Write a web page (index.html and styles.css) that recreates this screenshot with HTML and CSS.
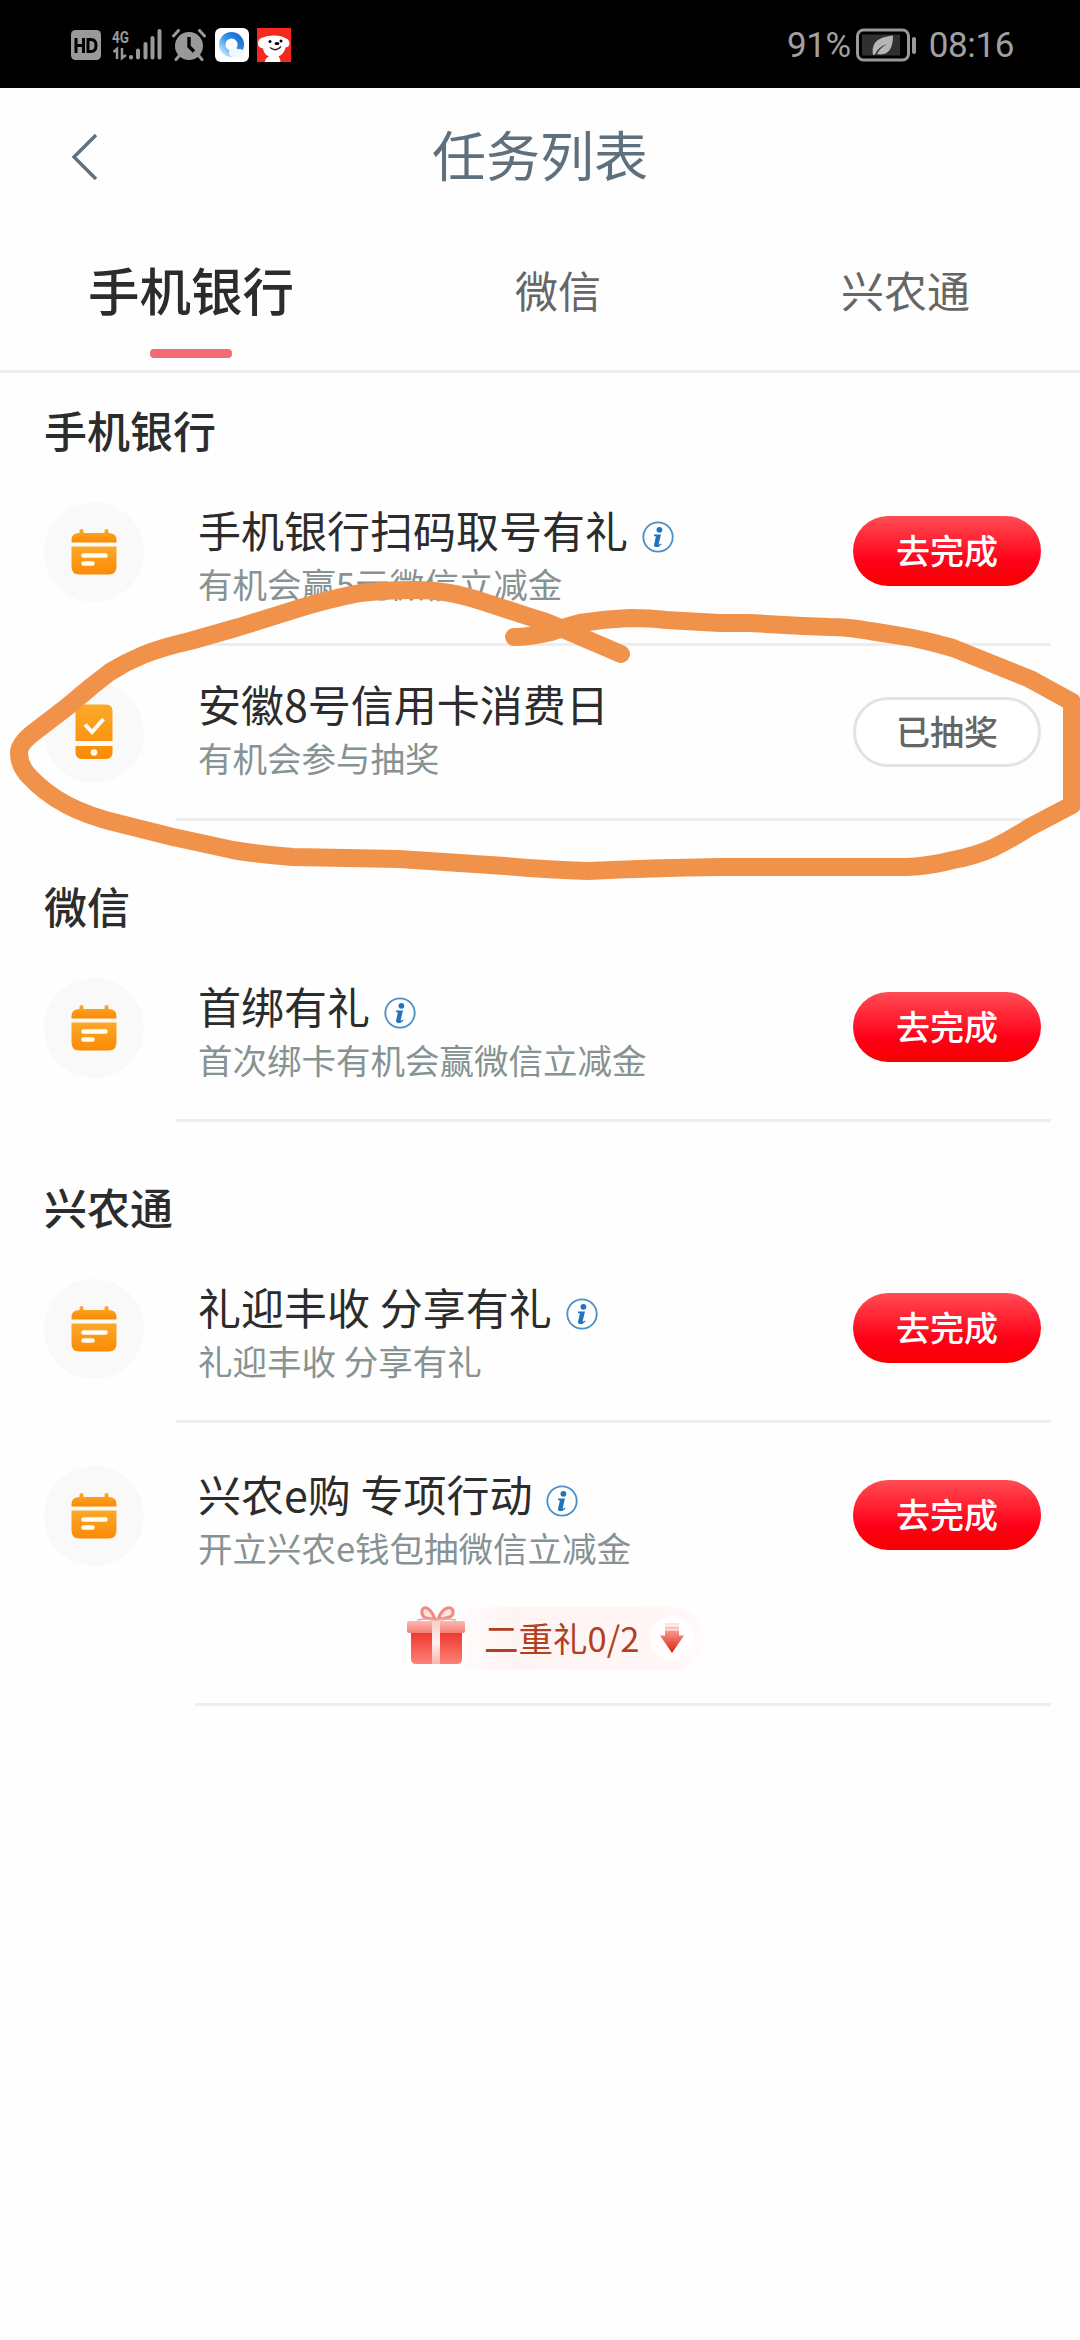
FILE: index.html
```html
<!DOCTYPE html>
<html lang="zh-CN">
<head>
<meta charset="utf-8">
<title>任务列表</title>
<link rel="stylesheet" href="styles.css">
</head>
<body>
<svg class="defs" aria-hidden="true">
  <defs>
    <linearGradient id="amber" x1="0" y1="0" x2="0" y2="1"><stop offset="0" stop-color="#fba92a"/><stop offset="1" stop-color="#fb8a05"/></linearGradient>
    <linearGradient id="lid" x1="0" y1="0" x2="0" y2="1"><stop offset="0" stop-color="#fbb9b0"/><stop offset="1" stop-color="#f47f77"/></linearGradient>
    <linearGradient id="box" x1="0" y1="0" x2="0" y2="1"><stop offset="0" stop-color="#ee3128"/><stop offset="1" stop-color="#fb8376"/></linearGradient>
    <linearGradient id="ribbon" x1="0" y1="0" x2="0" y2="1"><stop offset="0" stop-color="#f9cdc6"/><stop offset=".5" stop-color="#fff1ee"/><stop offset="1" stop-color="#fbb4a8"/></linearGradient>
    <linearGradient id="down" x1="0" y1="0" x2="0" y2="1"><stop offset="0" stop-color="#f99a90"/><stop offset="1" stop-color="#d9200c"/></linearGradient>
    <linearGradient id="swirl" x1="1" y1="0" x2="0" y2="1"><stop offset="0" stop-color="#1768d0"/><stop offset=".5" stop-color="#3797e8"/><stop offset="1" stop-color="#c3e6fb"/></linearGradient>
  </defs>
  <symbol id="calendar" viewBox="0 0 46 46">
    <path d="M10.500 0q2 0 2 2v2h21v-2q0-2 2-2t2 2v2q8 0 8 7v2.500h-45v-2.500q0-7 8-7v-2q0-2 2-2z" fill="url(#amber)"/>
    <path d="M.5 17.500h45v20q0 8-8 8h-29q-8 0-8-8z" fill="url(#amber)"/>
    <path d="M12.500 26.500h22M12.500 34.500h9" stroke="#fffdf3" stroke-width="4.500" stroke-linecap="round"/>
  </symbol>
  <symbol id="phone" viewBox="0 0 38 56">
    <path d="M7 .5h24q6.500 0 6.500 6.500v30h-37v-30q0-6.500 6.500-6.500zM.5 42h37v6.500q0 6.500-6.500 6.500h-24q-6.500 0-6.500-6.500z" fill="url(#amber)"/>
    <path d="M10 20.500l7 7.500 11.500-13" fill="none" stroke="#fffdf3" stroke-width="4"/>
    <circle cx="19" cy="48.500" r="3.300" fill="#fffdf3"/>
  </symbol>
  <symbol id="info" viewBox="0 0 32 32">
    <circle cx="16" cy="16" r="14.700" fill="#fff" stroke="#4b8fc6" stroke-width="1.800"/>
    <circle cx="17.400" cy="8.800" r="2.900" fill="#2173bd"/>
    <path d="M12 13.500h7l-2.300 9.500q-.2 1 .7.600l1.700-1 .4.800q-2.800 2.900-5.500 2.700-2.500-.3-1.900-2.900l1.700-7.200q.2-.8-1.800-.9z" fill="#2173bd"/>
  </symbol>
</svg>

<div class="screen">
  <header class="status">
    <div class="status-icons">
      <svg class="hd" viewBox="0 0 30 30"><rect width="30" height="30" rx="4.500" fill="#999"/><path d="M5 8v15M12.500 8v15M5 15.500h7.500M17 9.500h3q5 0 5 6t-5 6h-3z" fill="none" stroke="#000" stroke-width="3"/></svg>
      <svg class="signal" viewBox="0 0 50 34"><text x="0" y="14.500" class="net" textLength="17" lengthAdjust="spacingAndGlyphs">4G</text><path d="M1.500 24l3.500-3v10M10 20v10l4-3" fill="none" stroke="#999" stroke-width="2.500"/><path d="M19 29v.5M26 22.500v7M33.500 16v13.500M40.500 10v19.500M47.500 3v26.500" stroke="#999" stroke-width="4" stroke-linecap="round"/></svg>
      <svg class="alarm" viewBox="0 0 34 32"><circle cx="17" cy="17" r="14" fill="#999"/><path d="M1.500 7l5-5.500M32.500 7l-5-5.500M7 27l-3 3.500M27 27l3 3.500" stroke="#999" stroke-width="3" stroke-linecap="round"/><path d="M17 8v9.500l5 5" fill="none" stroke="#000" stroke-width="3.400"/></svg>
      <svg class="app" viewBox="0 0 34 34"><rect width="34" height="34" rx="6" fill="#fff"/><circle cx="16.500" cy="16.500" r="9.300" fill="none" stroke="url(#swirl)" stroke-width="6.500"/><circle cx="19" cy="24.500" r="5" fill="#eff9ff"/><circle cx="24.500" cy="25.500" r="4.500" fill="#eff9ff"/></svg>
      <svg class="app" viewBox="0 0 34 34"><path fill="#f6291e" d="M0 0h34v34h-34z"/><path d="M8 34q0-4 4-5.500-5-2-6-8-5-1-5-5 0-5 5-6 4-2 11-2 8 0 11 2.500 4 1 4.500 5 0 4-4 4.500-1 6-7 9 2 2 2 5.500z" fill="#fff"/><circle cx="13" cy="13.500" r="1.500"/><circle cx="24" cy="13" r="1.500"/><ellipse cx="20" cy="15.500" rx="2.500" ry="1.600"/><path d="M13 19.500q6 5 11-1" fill="none" stroke="#222" stroke-width="1.300"/></svg>
    </div>
    <div class="status-right">
      <span class="percent">91%</span>
      <svg class="battery" viewBox="0 0 61 34"><rect x="1.500" y="2" width="51" height="30" rx="6" fill="none" stroke="#999" stroke-width="3"/><rect x="6" y="6.500" width="38" height="21" fill="#303030"/><path d="M17 27c-2-14 7-18 20-19.500 0 12-4 21-16 18.500q3-6 10-10-9 3-12 10.500z" fill="#b5b5b5"/><rect x="56" y="9" width="4" height="17" rx="2" fill="#999"/></svg>
      <span class="clock">08:16</span>
    </div>
  </header>

  <nav class="titlebar">
    <svg class="back" viewBox="0 0 30 50"><path d="M26 3L4 25l22 22" fill="none" stroke="#5d7180" stroke-width="3.400"/></svg>
    <h1>任务列表</h1>
  </nav>

  <div class="tabs">
    <div class="tab active">手机银行</div>
    <div class="tab middle">微信</div>
    <div class="tab">兴农通</div>
  </div>

  <main>
    <section>
      <h2>手机银行</h2>
      <article class="task">
        <div class="badge"><svg class="cal"><use href="#calendar"/></svg></div>
        <div class="copy"><h3>手机银行扫码取号有礼<svg class="info"><use href="#info"/></svg></h3><p>有机会赢5元微信立减金</p></div>
        <button class="go">去完成</button>
      </article>
      <article class="task second">
        <div class="badge"><svg class="mobile"><use href="#phone"/></svg></div>
        <div class="copy"><h3>安徽8号信用卡消费日</h3><p>有机会参与抽奖</p></div>
        <button class="done">已抽奖</button>
      </article>
    </section>
    <section>
      <h2>微信</h2>
      <article class="task">
        <div class="badge"><svg class="cal"><use href="#calendar"/></svg></div>
        <div class="copy"><h3>首绑有礼<svg class="info"><use href="#info"/></svg></h3><p>首次绑卡有机会赢微信立减金</p></div>
        <button class="go">去完成</button>
      </article>
    </section>
    <section>
      <h2>兴农通</h2>
      <article class="task">
        <div class="badge"><svg class="cal"><use href="#calendar"/></svg></div>
        <div class="copy"><h3>礼迎丰收 分享有礼<svg class="info"><use href="#info"/></svg></h3><p>礼迎丰收 分享有礼</p></div>
        <button class="go">去完成</button>
      </article>
      <article class="task last">
        <div class="badge"><svg class="cal"><use href="#calendar"/></svg></div>
        <div class="copy"><h3>兴农e购 专项行动<svg class="info"><use href="#info"/></svg></h3><p>开立兴农e钱包抽微信立减金</p></div>
        <button class="go">去完成</button>
        <div class="bonus">
          <svg class="gift" viewBox="0 0 58 60">
            <path d="M4 24h51v29q0 5-5 5h-41q-5 0-5-5z" fill="url(#box)"/>
            <rect x="0" y="15" width="58" height="12" rx="2" fill="url(#lid)"/>
            <path d="M25 15h8v43h-8z" fill="url(#ribbon)"/>
            <path d="M28 13c-6-15-14-13-13-6 0 4 5 6 13 6zM31 13c6-15 16-13 15-6 0 4-7 6-15 6z" fill="#fde1dc" stroke="#f08a83" stroke-width="3"/>
            <path d="M10 14q12-2 19 0 8-2 20 0" fill="none" stroke="#f5a39b" stroke-width="1.500"/>
          </svg>
          <div class="pill"><span>二重礼0/2</span><i class="dot"><svg viewBox="0 0 24 32"><path d="M5 1h14v2.500h-14z" fill="#fde0dc"/><path d="M5 4.500h14v3h-14z" fill="#fbc0b9"/><path d="M5 8.500h14v5h5l-12 17.500-12-17.500h5z" fill="url(#down)"/></svg></i></div>
        </div>
      </article>
    </section>
  </main>

  <svg class="marker" viewBox="0 0 1080 2340"><path d="M621 654L558 627Q545 621 530 617L487 603C455 592 435 590 413 590Q385 590 360 593C335 598 316 603 300 608L239 627L190 641Q163 647 143 655Q126 662 110 672L92 686L67 707L33 733Q19 744 19 753Q19 764 27 774Q44 793 67 805Q88 816 117 823L173 837L233 850Q264 855 293 857L399 859L505 866Q548 870 588 871Q650 868 720 867H907Q930 866 953 860Q975 856 993 848Q1013 838 1030 827L1072 805V702L1030 679L953 648Q932 642 913 638Q890 634 870 631Q848 627 830 627L803 626L750 623H720L666 620Q650 618 630 618Q605 619 580 623Q562 628 551 632Q530 637 514 637"/></svg>
</div>
</body>
</html>
```
FILE: styles.css
```css
* { box-sizing: border-box; }
body, h1, h2, h3, p { margin: 0; font-weight: 400; }
body { background: #fefefe; font-family: "Noto Sans CJK SC", sans-serif; color: #2c2c2c; }
svg { display: block; }
.defs { position: absolute; width: 0; height: 0; }
.screen { position: relative; width: 1080px; height: 2340px; overflow: hidden; }

.status { height: 88px; background: #000; display: flex; justify-content: space-between; align-items: center; padding: 2px 66px 0 71px; color: #a0a0a0; }
.status-icons, .status-right { display: flex; align-items: center; }
.hd { width: 30px; height: 30px; margin-right: 11px; }
.signal { width: 50px; height: 34px; margin-right: 10px; }
.net { font: 700 17px Roboto, sans-serif; fill: #999; }
.alarm { width: 34px; height: 32px; margin-right: 9px; }
.app { width: 34px; height: 34px; margin-right: 8px; }
.status-right { font: 400 35px/44px Roboto, sans-serif; }
.status-right span { padding-top: 2px; }
.percent { letter-spacing: -.4px; margin-right: 5px; }
.battery { width: 61px; height: 34px; margin-right: 12px; }
.clock { letter-spacing: -.4px; }

.titlebar { height: 138px; display: grid; grid-template-columns: 112px 1fr 112px; align-items: center; }
.back { width: 30px; height: 50px; margin-left: 70px; }
h1 { font-size: 54px; line-height: 80px; padding-bottom: 6px; text-align: center; color: #5e707d; }

.tabs { height: 147px; border-bottom: 3px solid #ededee; display: flex; justify-content: space-between; padding: 0 110px 0 88px; }
.tab { font-size: 43px; line-height: 126px; color: #666; }
.tab.middle { margin-right: 19px; }
.tab.active { font-size: 51.500px; font-weight: 500; color: #2c2c2c; display: flex; flex-direction: column; align-items: center; }
.tab.active::after { content: ""; width: 82px; height: 9px; margin-top: -3px; border-radius: 4px; background: #f36b74; }

section + section { margin-top: 28px; }
h2 { height: 120px; font-size: 43px; font-weight: 500; line-height: 113px; padding-left: 44px; }
.task { position: relative; height: 153px; padding: 9px 39px 0 44px; display: grid; grid-template-columns: 100px 1fr 188px; column-gap: 54px; align-content: start; }
.task::after { content: ""; position: absolute; left: 176px; right: 29px; bottom: 0; height: 3px; background: #eeeeef; }
.badge { width: 100px; height: 100px; border-radius: 50%; background: #f9f9fa; display: flex; align-items: center; justify-content: center; }
.cal { width: 46px; height: 46px; }
.mobile { width: 38px; height: 56px; margin-top: -3px; }
.copy { margin-top: -3px; }
h3 { display: flex; align-items: center; gap: 14px; font-size: 43px; line-height: 60px; white-space: nowrap; }
.info { width: 32px; height: 32px; margin-top: 15px; }
.copy p { font-size: 34.500px; line-height: 48px; color: #879292; white-space: nowrap; }
button { width: 188px; height: 70px; margin-top: 14px; padding: 0; border: 0; border-radius: 35px; font: 500 34px/66px "Noto Sans CJK SC", sans-serif; }
.go { color: #fff; background: linear-gradient(#ff4d55, #ff0018 65%, #f80000); padding-bottom: 3px; }
.done { color: #666; background: #fff; border: 3px solid #e2e3e4; line-height: 60px; padding-bottom: 3px; }
.second { height: 175px; padding-top: 37px; }
.second .copy { margin-top: -10px; }
.last { height: 283px; padding-top: 43px; }
.last::after { left: 195px; }

.bonus { grid-column: 1 / -1; display: flex; align-items: center; margin: 34px 0 0 363px; height: 66px; }
.gift { width: 58px; height: 60px; margin-top: -4px; }
.pill { height: 63px; width: 239px; border-radius: 0 32px 32px 0; background: linear-gradient(90deg, #fffbfb, #fff4f4 20%, #fff6f6 85%, #fffafa); display: flex; align-items: center; justify-content: space-between; padding: 0 10px 0 19px; font-size: 34.500px; line-height: 60px; color: #b0401f; }
.pill span { margin-top: -2px; }
.dot { width: 44px; height: 44px; border-radius: 50%; background: #fffdfd; display: grid; place-items: center; }
.dot svg { width: 24px; height: 32px; }

.marker { position: absolute; left: 0; top: 0; width: 1080px; height: 2340px; pointer-events: none; }
.marker path { fill: none; stroke: #f1924b; stroke-width: 18px; stroke-linecap: round; stroke-linejoin: round; }
```
